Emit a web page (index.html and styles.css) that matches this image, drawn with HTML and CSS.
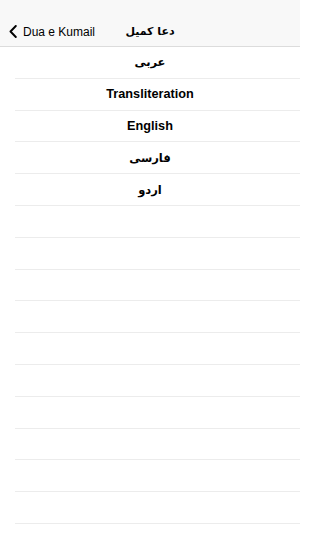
FILE: index.html
```html
<!DOCTYPE html>
<html>
<head>
<meta charset="utf-8">
<link rel="stylesheet" href="styles.css">
</head>
<body>
<div class="screen">
  <header class="navbar">
    <div class="status"></div>
    <div class="navrow">
      <div class="back">
        <svg class="chev" width="8" height="13" viewBox="0 0 8 13"><path d="M6.8 1 L1.5 6.5 L6.8 12" fill="none" stroke="#000" stroke-width="1.9" stroke-linecap="round" stroke-linejoin="round"/></svg>
        <span class="back-label">Dua e Kumail</span>
      </div>
      <div class="title" dir="rtl">دعا كميل</div>
    </div>
  </header>
  <ul class="list">
    <li class="row"><span class="ar" dir="rtl">عربی</span></li>
    <li class="row"><span class="lat">Transliteration</span></li>
    <li class="row"><span class="lat">English</span></li>
    <li class="row"><span class="ar" dir="rtl">فارسی</span></li>
    <li class="row"><span class="ar" dir="rtl">اردو</span></li>
    <li class="row"></li>
    <li class="row"></li>
    <li class="row"></li>
    <li class="row"></li>
    <li class="row"></li>
    <li class="row"></li>
    <li class="row"></li>
    <li class="row"></li>
    <li class="row"></li>
    <li class="row"></li>
  </ul>
</div>
</body>
</html>
```

FILE: styles.css
```css
* { box-sizing: border-box; }
html, body { margin: 0; padding: 0; background: #fff; }
body { font-family: "Liberation Sans", Arial, sans-serif; color: #000; }
.screen { width: 300px; height: 533px; overflow: hidden; }
.navbar {
  background: #f8f8f8;
  border-bottom: 1px solid #dcdcdc;
  height: 47px;
}
.status { height: 17px; }
.navrow {
  position: relative;
  height: 29px;
  display: flex;
  align-items: center;
}
.back {
  display: flex;
  align-items: center;
  padding-left: 9px;
  gap: 6px;
}
.chev { display: block; }
.back-label { font-size: 12px; }
.title {
  position: absolute;
  left: 0; right: 0; top: 0; bottom: 0;
  display: flex;
  align-items: center;
  justify-content: center;
  font-family: "DejaVu Sans", sans-serif;
  font-weight: bold;
  font-size: 11px;
  pointer-events: none;
}
.list { list-style: none; margin: 0; padding: 0 0 0 15px; }
.row {
  height: 31.8px;
  border-bottom: 1px solid #ececec;
  display: flex;
  align-items: center;
  justify-content: center;
  padding-right: 15px;
}
.lat { font-weight: bold; font-size: 12.7px; }
.ar { font-family: "DejaVu Sans", sans-serif; font-weight: bold; font-size: 11.5px; }
```
